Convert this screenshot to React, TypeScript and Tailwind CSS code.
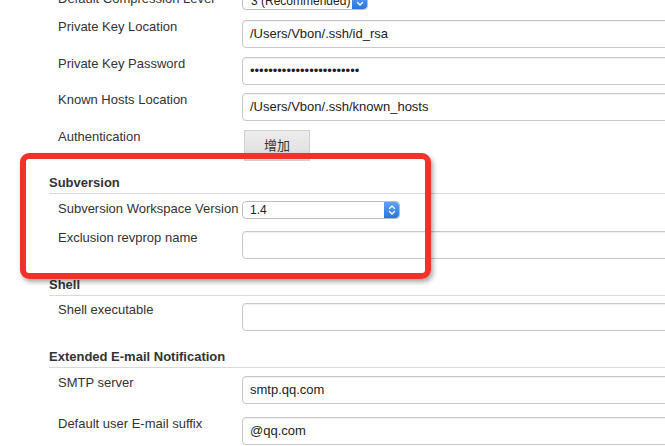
import React from "react";

function Stepper() {
  return (
    <div className="flex h-full w-[15px] items-center justify-center rounded-r-[4px] bg-gradient-to-b from-[#5ba4f5] to-[#2a74e0]">
      <svg width="8" height="12" viewBox="0 0 8 12" fill="none">
        <path d="M1.5 4.5 L4 2 L6.5 4.5" stroke="white" strokeWidth="1.3" strokeLinecap="round" strokeLinejoin="round" />
        <path d="M1.5 7.5 L4 10 L6.5 7.5" stroke="white" strokeWidth="1.3" strokeLinecap="round" strokeLinejoin="round" />
      </svg>
    </div>
  );
}

function TextInput({ value }: { value?: string }) {
  return (
    <div className="mt-[1px] flex h-[28px] w-[460px] shrink-0 items-center rounded-[4px] border border-[#c8c8c8] bg-white pl-[7px] text-[13px] text-[#222] shadow-[inset_0_1px_1px_rgba(0,0,0,0.06)]">
      {value}
    </div>
  );
}

function Label({ children }: { children: React.ReactNode }) {
  return <div className="w-[184px] shrink-0 text-[13px] leading-[16px] text-[#333]">{children}</div>;
}

function Header({ children, pt }: { children: React.ReactNode; pt: string }) {
  return (
    <div className={`${pt} border-b border-[#d9d9d9] pb-[2px] text-[13px] font-bold leading-[16px] text-[#333]`}>
      {children}
    </div>
  );
}

export default function App() {
  return (
    <div
      className="relative h-[446px] w-[665px] overflow-hidden bg-white"
      style={{ fontFamily: '"Liberation Sans", Arial, "Noto Sans CJK SC", sans-serif' }}
    >
      <div className="-mt-[9px] pl-[49px]">
        {/* Default Compression Level */}
        <div className="flex h-[28px] items-start pl-[9px]">
          <Label>Default Compression Level</Label>
          <div className="mt-[1px] flex h-[18px] w-[126px] items-center justify-between rounded-[4px] border border-[#bdbdbd] bg-white pl-[8px] text-[12px] text-[#222]">
            <span>3 (Recommended)</span>
            <Stepper />
          </div>
        </div>
        {/* Private Key Location */}
        <div className="flex h-[37px] items-start pl-[9px]">
          <Label>Private Key Location</Label>
          <TextInput value="/Users/Vbon/.ssh/id_rsa" />
        </div>
        <div className="flex h-[36px] items-start pl-[9px]">
          <Label>Private Key Password</Label>
          <TextInput value="••••••••••••••••••••••••" />
        </div>
        <div className="flex h-[37px] items-start pl-[9px]">
          <Label>Known Hosts Location</Label>
          <TextInput value="/Users/Vbon/.ssh/known_hosts" />
        </div>
        <div className="flex h-[32px] items-start pl-[9px]">
          <Label>Authentication</Label>
          <div className="ml-[2px] mt-[1px] flex h-[31px] w-[66px] items-center justify-center border border-[#cfcfcf] bg-gradient-to-b from-[#ececec] to-[#dedede] text-[13px] text-[#333]">
            增加
          </div>
        </div>

        <Header pt="pt-[14px]">Subversion</Header>
        <div className="mt-[7px] flex h-[18px] items-start pl-[9px]">
          <Label>Subversion Workspace Version</Label>
          <div className="flex h-[18px] w-[158px] items-center justify-between rounded-[4px] border border-[#bdbdbd] bg-white pl-[7px] text-[12px] text-[#222]">
            <span>1.4</span>
            <Stepper />
          </div>
        </div>
        <div className="mt-[11px] flex h-[29px] items-start pl-[9px]">
          <Label>Exclusion revprop name</Label>
          <TextInput />
        </div>

        <Header pt="pt-[18px]">Shell</Header>
        <div className="mt-[6px] flex h-[29px] items-start pl-[9px]">
          <Label>Shell executable</Label>
          <TextInput />
        </div>

        <Header pt="pt-[18px]">Extended E-mail Notification</Header>
        <div className="mt-[7px] flex h-[29px] items-start pl-[9px]">
          <Label>SMTP server</Label>
          <TextInput value="smtp.qq.com" />
        </div>
        <div className="mt-[12px] flex h-[29px] items-start pl-[9px]">
          <Label>Default user E-mail suffix</Label>
          <TextInput value="@qq.com" />
        </div>
      </div>

      {/* Red highlight annotation */}
      <div className="pointer-events-none absolute left-[20px] top-[153px] h-[126px] w-[411px] rounded-[9px] border-[6px] border-[#f2322a] shadow-[2px_3px_5px_rgba(0,0,0,0.35)]" />
    </div>
  );
}
